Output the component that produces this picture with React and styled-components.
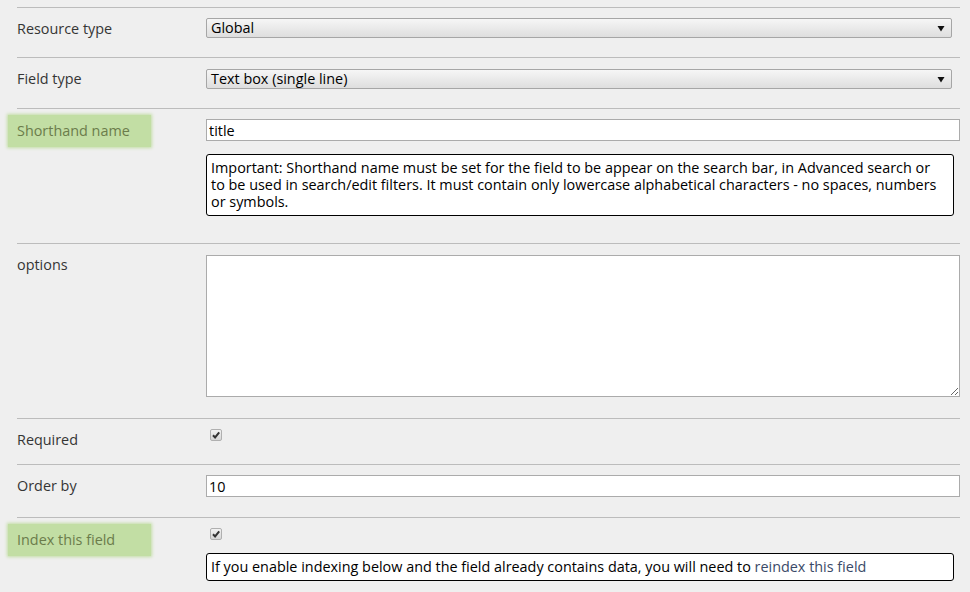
import React from 'react';
import styled, { createGlobalStyle, css } from 'styled-components';

const GlobalStyle = createGlobalStyle`
   body {
      margin: 0;
      background-color: #efefef;
      font-family: "Open Sans", "Noto Sans", sans-serif;
      font-size: 14.4px;
      color: #000;
   }
`;

const Arrow = () => (
   <svg width="8" height="7" viewBox="0 0 8 7">
      <path d="M0.5 1 L7.5 1 L4 6.5 Z" fill="#111" />
   </svg>
);

const Tick = () => (
   <svg width="10" height="10" viewBox="0 0 10 10">
      <path d="M2 5.2 L4.1 7.4 L8.2 2.4" stroke="#333" strokeWidth="2" fill="none" />
   </svg>
);

const App = () => {
   return (
      <Page>
         <GlobalStyle />

         <Row>
            <Label>Resource type</Label>
            <Fields>
               <SelectBox>
                  <span>Global</span>
                  <Arrow />
               </SelectBox>
            </Fields>
         </Row>

         <Row>
            <Label>Field type</Label>
            <Fields>
               <SelectBox lowered>
                  <span>Text box (single line)</span>
                  <Arrow />
               </SelectBox>
            </Fields>
         </Row>

         <Row>
            <Label highlight>Shorthand name</Label>
            <Fields>
               <TextInput defaultValue="title" />
               <Help last>
                  Important: Shorthand name must be set for the field to be appear on the search bar, in Advanced search or to be used in search/edit filters. It must contain only lowercase alphabetical characters - no spaces, numbers or symbols.
               </Help>
            </Fields>
         </Row>

         <Row>
            <Label>options</Label>
            <Fields>
               <TextArea />
            </Fields>
         </Row>

         <Row>
            <Label>Required</Label>
            <Fields>
               <CheckBox><Tick /></CheckBox>
            </Fields>
         </Row>

         <Row>
            <Label>Order by</Label>
            <Fields>
               <TextInput defaultValue="10" spaced />
            </Fields>
         </Row>

         <Row>
            <Label highlight>Index this field</Label>
            <Fields>
               <CheckBox><Tick /></CheckBox>
               <Help>
                  If you enable indexing below and the field already contains data, you will need to <HelpLink href="#">reindex this field</HelpLink>
               </Help>
            </Fields>
         </Row>
      </Page>
   );
};

export default App;

const Page = styled.div`
   padding: 7px 10px 0 17px;
   width: 943px;
`;

const Row = styled.div`
   display: flex;
   border-top: 1px solid #bcbcbc;
   padding: 10px 0 13px;
`;

const Label = styled.div`
   width: 189px;
   flex-shrink: 0;
   color: #353535;
   line-height: 20px;
   padding-top: 1px;
   min-height: 21px;

   ${(props) => props.highlight && css`
      align-self: flex-start;
      width: 125px;
      height: 32px;
      padding: 0 9px;
      line-height: 32px;
      margin: -4px 55px -6px -9px;
      background-color: #c2dea4;
      box-shadow: 0 0 3px 1px #c2dea4;
      color: #6b7c4b;
   `}
`;

const Fields = styled.div`
   flex: 1;
   display: flex;
   flex-direction: column;
   gap: 13px;
`;

const SelectBox = styled.div`
   display: flex;
   align-items: center;
   justify-content: space-between;
   height: 20px;
   box-sizing: border-box;
   margin: ${(props) => (props.lowered ? '1px' : '0')} 8px 6px 0;
   padding: 0 6px 0 4px;
   border: 1px solid #a6a6a6;
   border-radius: 2px;
   background: linear-gradient(#f6f6f6, #dedede);
   line-height: 18px;
`;

const TextInput = styled.input`
   height: 22px;
   box-sizing: border-box;
   border: 1px solid #ababab;
   background: #fff;
   padding: 0 2px;
   font: inherit;
   color: #000;
   outline: none;
   margin-bottom: ${(props) => (props.spaced ? '7px' : '0')};
`;

const TextArea = styled.textarea`
   display: block;
   height: 142px;
   box-sizing: border-box;
   border: 1px solid #ababab;
   background: #fff;
   font: inherit;
   margin: 1px 0 8px;
   outline: none;
`;

const CheckBox = styled.span`
   display: flex;
   align-items: center;
   justify-content: center;
   width: 12px;
   height: 12px;
   box-sizing: border-box;
   margin: 0 0 0 4px;
   border: 1px solid #b0b0b0;
   border-radius: 2px;
   background: linear-gradient(#f2f2f2, #d6d6d6);
`;

const Help = styled.div`
   margin: 0 6px ${(props) => (props.last ? '14px' : '0')} 0;
   padding: 4px 10px 5px 4px;
   border: 1px solid #000;
   border-radius: 3px;
   background: #fff;
   line-height: 17px;
`;

const HelpLink = styled.a`
   color: #3a4a68;
   text-decoration: none;
`;
